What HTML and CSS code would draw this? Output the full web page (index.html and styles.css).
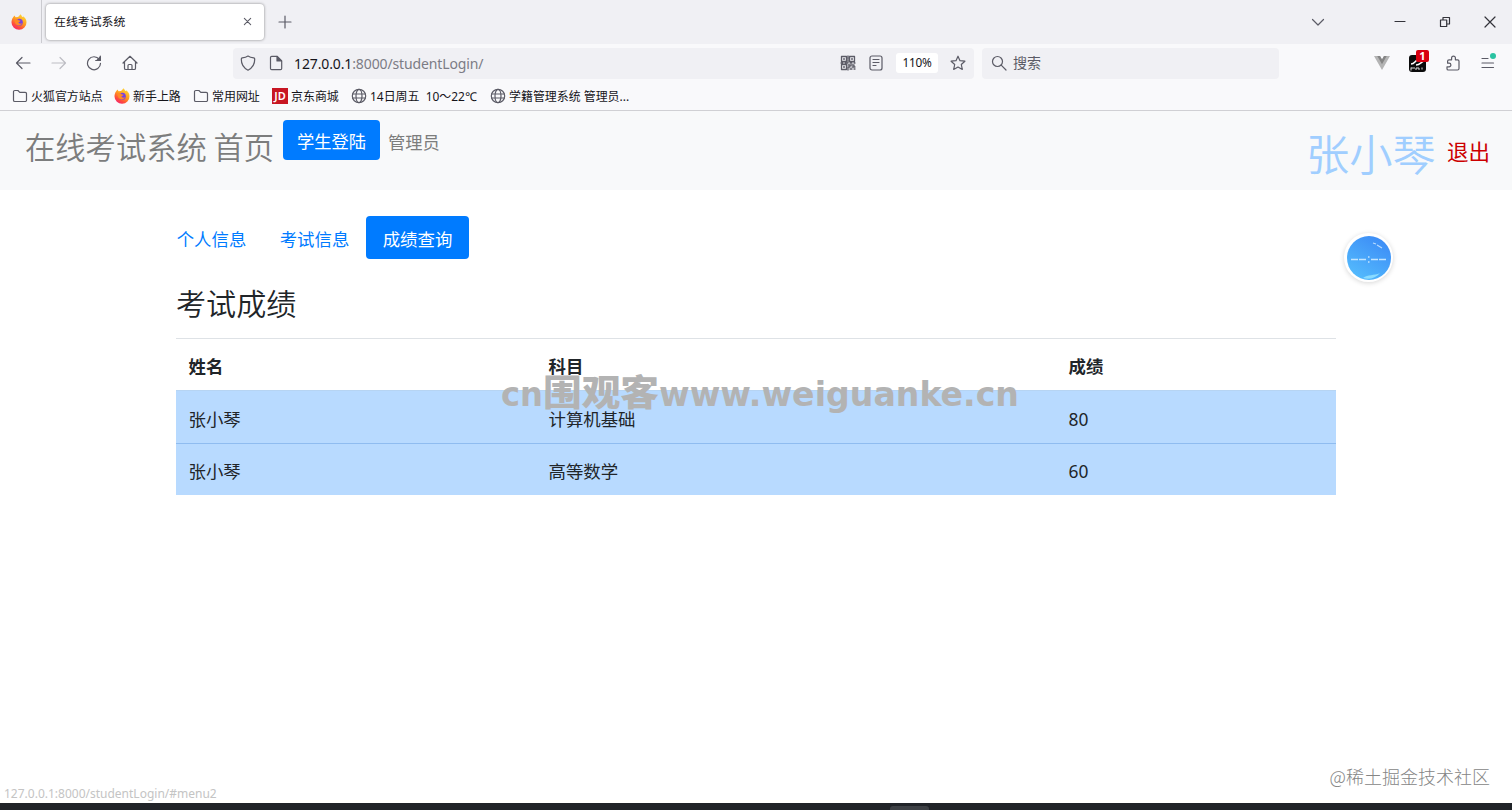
FILE: index.html
```html
<!DOCTYPE html>
<html lang="zh-CN">
<head>
  <meta charset="UTF-8">
  <title>在线考试系统</title>
  <link rel="stylesheet" href="styles.css">
</head>
<body>
  <svg width="0" height="0" class="defs">
    <defs>
      <linearGradient id="fox-body" x1="0.8" y1="0" x2="0.2" y2="1">
        <stop offset="0" stop-color="#ffe03a"/>
        <stop offset="0.45" stop-color="#ff9a1f"/>
        <stop offset="0.75" stop-color="#ff4a3d"/>
        <stop offset="1" stop-color="#f0207a"/>
      </linearGradient>
      <symbol id="firefox" viewBox="0 0 16 16">
        <path d="M2.2 3.2 3.4 1.6 4.6 3.3 6.8 3C8 2.4 8.8 1.4 9.3.3c1 .8 1.6 1.7 1.9 2.6l1.3-.5c1.900 1.400 3 3.400 3 5.800A7.500 7.500 0 0 1 .5 8.500C.5 6.400 1.100 4.600 2.200 3.200z" fill="url(#fox-body)"/>
        <circle cx="8.300" cy="8.200" r="3.500" fill="#7542e5"/>
        <path d="M3 5.500c2-.8 3.600-.3 4.600.8l2 .4c-.4 1.100-1.800 1-2.200 1.900.4 1.400 2.300 1.300 3.700.7-1 2.500-5 2.900-6.500.4C3.800 8.500 3.700 7 3 5.500z" fill="#ff8a25"/>
      </symbol>
      <symbol id="folder" viewBox="0 0 16 16">
        <path d="M1.500 12.200V3.800a1.300 1.300 0 0 1 1.300-1.300h3.100l1.900 1.900h5.400a1.300 1.300 0 0 1 1.300 1.300v6.500a1.300 1.300 0 0 1-1.300 1.300H2.800a1.300 1.300 0 0 1-1.300-1.300z"/>
      </symbol>
      <symbol id="globe" viewBox="0 0 16 16">
        <circle cx="8" cy="8" r="6.700"/>
        <ellipse cx="8" cy="8" rx="3" ry="6.700"/>
        <path d="M1.500 6h13M1.500 10h13"/>
      </symbol>
    </defs>
  </svg>

  <div class="tab-bar">
    <div class="pinned-tab"><svg class="fox" viewBox="0 0 16 16"><use href="#firefox"/></svg></div>
    <div class="tab">
      <span>在线考试系统</span>
      <svg class="icon close" viewBox="0 0 10 10"><path d="M1.500 1.500l7 7M8.500 1.500l-7 7"/></svg>
    </div>
    <svg class="icon new-tab" viewBox="0 0 14 14"><path d="M7 1v12M1 7h12"/></svg>
    <div class="window-buttons">
      <svg class="icon" viewBox="0 0 14 14"><path d="M1.500 4.500L7 10l5.500-5.500"/></svg>
      <svg class="icon" viewBox="0 0 14 14"><path d="M2 6.500h10"/></svg>
      <svg class="icon" viewBox="0 0 14 14"><path d="M2.500 5h6.200v6.500H2.500zM5 5V2.500h6.500V9H8.700"/></svg>
      <svg class="icon" viewBox="0 0 14 14"><path d="M2 2l10 10M12 2L2 12"/></svg>
    </div>
  </div>

  <div class="toolbar">
    <div class="nav-buttons">
      <svg class="icon" viewBox="0 0 16 16"><path d="M15 8H1.500M7 2.500L1.500 8 7 13.500"/></svg>
      <svg class="icon disabled" viewBox="0 0 16 16"><path d="M1 8h13.500M9 2.500L14.500 8 9 13.500"/></svg>
      <svg class="icon" viewBox="0 0 16 16"><path d="M13.300 4.500A6.500 6.500 0 1 0 14.500 8.300M14.300 1v4.500H9.700"/><path d="M14.300 2v3.500h-3.500z" fill="#5b5b66"/></svg>
      <svg class="icon" viewBox="0 0 16 16"><path d="M1 8l7-6.700L15 8M2.500 6.700v6.500c0 .8.500 1.300 1.300 1.300h8.400c.8 0 1.300-.5 1.300-1.300V6.700M6 14.500v-4c0-.6.400-1 1-1h2c.6 0 1 .4 1 1v4"/></svg>
    </div>
    <div class="url-bar">
      <svg class="icon" viewBox="0 0 16 16"><path d="M8 1C6.500 2 4 2.700 2.300 2.900c-.7.100-1 .5-1 1.200C1.200 9.500 3.500 13 8 15.200c4.500-2.200 6.800-5.700 6.700-11.100 0-.7-.3-1.100-1-1.200C12 2.700 9.500 2 8 1z"/></svg>
      <svg class="icon page-icon" viewBox="0 0 16 16"><path d="M2.500 2.500c0-.7.500-1.200 1.200-1.200h5.500L13.700 6v7.500c0 .7-.5 1.200-1.200 1.200H3.700c-.7 0-1.200-.5-1.200-1.200z"/><path d="M9 1.500V6h4.500z" fill="#5b5b66"/></svg>
      <span class="url"><b>127.0.0.1</b>:8000/studentLogin/</span>
      <svg class="icon qr" viewBox="0 0 16 16"><path d="M1.500 1.500h5v5h-5zM9.500 1.500h5v5h-5zM1.500 9.500h5v5h-5zM3.500 4h1M11.500 4h1M3.500 12h1M8 1v3M8 5v3H5M1 8h2M10 8h2M14 8h1M8 10h2v2H8v3M11 10h2M12 12h3M14 10v1M10 14h2M14 14h1"/></svg>
      <svg class="icon reader" viewBox="0 0 16 16"><rect x="2" y="1" width="12" height="14" rx="2"/><path d="M5 4.500h6M5 7.500h6M5 10.500h3"/></svg>
      <span class="zoom">110%</span>
      <svg class="icon star" viewBox="0 0 16 16"><path d="M8 1.200l2 4.500 4.900.5-3.600 3.300 1 4.900L8 12l-4.300 2.400 1-4.900L1.100 6.200 6 5.700z"/></svg>
    </div>
    <div class="search-bar">
      <svg class="icon" viewBox="0 0 16 16"><circle cx="6.500" cy="6.500" r="5"/><path d="M10.200 10.200L15 15"/></svg>
      <span>搜索</span>
    </div>
    <div class="extensions">
      <svg class="vue" viewBox="0 0 16 16"><path d="M0 1h6l2 3.500L10 1h6L8 15z" fill="#b4b4b4"/><path d="M3.300 1H6l2 3.500L10 1h2.700L8 9.300z" fill="#858585"/></svg>
      <div class="translate">
        <svg viewBox="0 0 17 17"><rect width="17" height="17" rx="3" fill="#0b0b0b"/><path d="M2 9c4 0 4-4 8-5M7 10c4 0 5-3 8-4" fill="none" stroke="#fff" stroke-width="1.500"/><path d="M2 13h4M2 15.500v-3M7 15v-2h3v2M13 12.500v2" fill="none" stroke="#ddd"/></svg>
        <span class="badge">1</span>
      </div>
      <svg class="icon puzzle" viewBox="0 0 16 16"><path d="M3.300 15h9.200c1 0 1.500-.5 1.500-1.500V6.200c0-1-.5-1.400-1.400-1.400h-2.200V3a1.900 1.900 0 0 0-3.800 0v1.800H4c-1 0-1.400.5-1.400 1.400v2h1.500a1.800 1.800 0 0 1 0 3.600H2v1.900c0 .8.500 1.300 1.300 1.300z"/></svg>
      <div class="menu">
        <svg class="icon" viewBox="0 0 16 16"><path d="M2 3.500h6M2 8h11.500M2 12.500h11.500"/></svg>
        <i class="dot"></i>
      </div>
    </div>
  </div>

  <div class="bookmarks">
    <a class="bm-1"><svg class="icon"><use href="#folder"/></svg>火狐官方站点</a>
    <a class="bm-2"><svg class="fox"><use href="#firefox"/></svg>新手上路</a>
    <a class="bm-3"><svg class="icon"><use href="#folder"/></svg>常用网址</a>
    <a class="bm-4"><span class="jd">JD</span>京东商城</a>
    <a class="bm-5"><svg class="icon"><use href="#globe"/></svg>14日周五&nbsp; 10～22℃</a>
    <a class="bm-6"><svg class="icon"><use href="#globe"/></svg>学籍管理系统 管理员...</a>
  </div>

  <div class="page">
    <nav class="navbar">
      <a class="brand">在线考试系统 首页</a>
      <a class="btn-login">学生登陆</a>
      <a class="nav-link">管理员</a>
      <div class="user">
        <span class="user-name">张小琴</span>
        <a class="logout">退出</a>
      </div>
    </nav>

    <div class="container">
      <ul class="pills">
        <li>个人信息</li>
        <li>考试信息</li>
        <li class="active">成绩查询</li>
      </ul>
      <h3>考试成绩</h3>
      <table>
        <thead>
          <tr><th class="col-name">姓名</th><th class="col-subject">科目</th><th>成绩</th></tr>
        </thead>
        <tbody>
          <tr><td>张小琴</td><td>计算机基础</td><td>80</td></tr>
          <tr><td>张小琴</td><td>高等数学</td><td>60</td></tr>
        </tbody>
      </table>
    </div>
  </div>

  <div class="clock-ball">
    <svg viewBox="0 0 44 44">
      <defs>
        <linearGradient id="ball" x1="0.2" y1="1" x2="0.800" y2="0">
          <stop offset="0" stop-color="#55bdfd"/>
          <stop offset="1" stop-color="#3b8af6"/>
        </linearGradient>
      </defs>
      <circle cx="22" cy="22" r="22" fill="url(#ball)"/>
      <path d="M16 42c5-4 11-2 17-5-4 5-11 7-17 5z" fill="#8bdcff"/>
      <path d="M26 7l3 1M30 9l5 3" stroke="#b9dcff" stroke-width="1.200"/>
      <path d="M4 23.500h7M12 23.500h7M24 23.500h7M32 23.500h7" stroke="#c4e5ff" stroke-width="1.500"/>
      <path d="M21 21h1.500M21 26h1.500" stroke="#c4e5ff" stroke-width="1.500"/>
    </svg>
  </div>

  <svg class="watermark" viewBox="0 0 520 46">
    <text x="0" y="31" textLength="42" lengthAdjust="spacingAndGlyphs" font-size="34">cn</text>
    <text x="42" y="31" textLength="116" lengthAdjust="spacingAndGlyphs" font-size="36" class="cjk">围观客</text>
    <text x="158" y="31" textLength="360" lengthAdjust="spacingAndGlyphs" font-size="34">www.weiguanke.cn</text>
  </svg>
  <div class="credit">@稀土掘金技术社区</div>
  <div class="status">127.0.0.1:8000/studentLogin/#menu2</div>
  <div class="taskbar"><i></i></div>
</body>
</html>
```
FILE: styles.css
```css
* {
  box-sizing: border-box;
  margin: 0;
  padding: 0;
}

body {
  width: 1512px;
  height: 810px;
  overflow: hidden;
  display: flex;
  flex-direction: column;
  position: relative;
  background: #fff;
  color: #212529;
  font-family: "Noto Sans", "Noto Sans CJK SC", sans-serif;
}

.defs {
  position: absolute;
}

svg {
  display: block;
  flex: none;
}

.icon {
  width: 16px;
  height: 16px;
  fill: none;
  stroke: #5b5b66;
  stroke-width: 1.2;
  stroke-linecap: round;
  stroke-linejoin: round;
}

.fox {
  width: 16px;
  height: 16px;
}

/* tabs */
.tab-bar {
  height: 44px;
  padding-bottom: 1px;
  display: flex;
  align-items: center;
  background: #f0f0f4;
}

.pinned-tab {
  width: 42px;
  height: 43px;
  padding: 14px 0 0 11px;
  border-right: 1px solid #cbcbd0;
  align-self: flex-start;
}

.tab {
  width: 218px;
  height: 36px;
  margin-left: 4px;
  padding: 0 12px 0 8px;
  display: flex;
  align-items: center;
  justify-content: space-between;
  background: #fff;
  border-radius: 4px;
  box-shadow: 0 0 3px rgba(0, 0, 0, 0.45);
  font-size: 11.9px;
  color: #15141a;
}

.tab span {
  padding-bottom: 2px;
}

.close {
  width: 9px;
  height: 9px;
}

.new-tab {
  width: 14px;
  height: 14px;
  margin-left: 14px;
}

.window-buttons {
  display: flex;
  margin-left: auto;
  padding-right: 15px;
}

.window-buttons .icon {
  width: 14px;
  height: 14px;
  margin-left: 31px;
  stroke: #33333a;
}

.window-buttons .icon:first-child {
  margin-right: 37px;
  stroke: #5b5b66;
}

/* toolbar */
.toolbar {
  height: 39px;
  padding-bottom: 1px;
  display: flex;
  align-items: center;
  background: #f9f9fb;
}

.nav-buttons {
  width: 233px;
  padding-left: 15px;
  display: flex;
  gap: 19.5px;
}

.disabled {
  stroke: #bdbdc3;
}

.url-bar {
  width: 741px;
  height: 31px;
  padding: 0 8px 0 7px;
  display: flex;
  align-items: center;
  background: #f0f0f4;
  border-radius: 4px;
}

.page-icon {
  margin-left: 12px;
}

.url {
  margin-left: 10px;
  font-size: 14px;
  letter-spacing: -0.12px;
  color: #7c7c85;
}

.url b {
  font-weight: 400;
  color: #15141a;
}

.qr {
  margin-left: auto;
  stroke-width: 1.3;
}

.reader {
  margin-left: 12px;
}

.zoom {
  width: 42px;
  height: 20px;
  margin: 0 12px;
  background: #fff;
  border-radius: 3px;
  font-size: 11.8px;
  line-height: 19px;
  letter-spacing: -0.2px;
  text-align: center;
  color: #15141a;
}

.search-bar {
  width: 297px;
  height: 31px;
  margin-left: 8px;
  padding-left: 9px;
  display: flex;
  align-items: center;
  gap: 6px;
  background: #f0f0f4;
  border-radius: 4px;
  font-size: 14px;
  color: #5b5b66;
}

.search-bar span {
  padding-bottom: 2px;
}

.extensions {
  display: flex;
  align-items: center;
  margin-left: auto;
  padding-right: 16px;
  gap: 19px;
}

.vue {
  width: 16px;
  height: 16px;
}

.translate {
  position: relative;
}

.translate svg {
  width: 17px;
  height: 17px;
}

.badge {
  position: absolute;
  top: -5px;
  left: 7px;
  width: 13px;
  height: 12px;
  border-radius: 2px;
  background: #d70010;
  color: #fff;
  font-size: 11px;
  font-weight: 700;
  line-height: 12px;
  text-align: center;
}

.menu {
  position: relative;
}

.dot {
  position: absolute;
  top: -2px;
  right: 0;
  width: 6px;
  height: 6px;
  border-radius: 50%;
  background: #2ac3a2;
}

/* bookmarks */
.bookmarks {
  height: 28px;
  padding: 0 0 2px 12px;
  display: flex;
  align-items: center;
  background: #f9f9fb;
  border-bottom: 1px solid #d0d0d4;
  font-size: 11.95px;
  color: #15141a;
}

.bookmarks a {
  display: flex;
  align-items: center;
  gap: 3px;
  white-space: nowrap;
}

.bm-1 { width: 102px; }
.bm-2 { width: 79px; }
.bm-3 { width: 79px; }
.bm-4 { width: 79px; }
.bm-5 { width: 139px; }

.jd {
  width: 16px;
  height: 16px;
  background: #c81623;
  color: #fff;
  font-size: 11px;
  font-weight: 600;
  line-height: 16px;
  text-align: center;
}

/* page */
.page {
  flex: 1;
}

.navbar {
  height: 79px;
  padding: 9px 22px 0 25px;
  display: flex;
  align-items: flex-start;
  background: #f8f9fa;
  color: #7c7d7d;
  font-family: "Noto Sans CJK SC", sans-serif;
  font-size: 17.3px;
}

.brand {
  width: 258px;
  padding-top: 4px;
  font-size: 30.3px;
  line-height: 45px;
  font-weight: 350;
  white-space: nowrap;
}

.btn-login {
  width: 97px;
  height: 40px;
  border-radius: 4px;
  background: #007bff;
  color: #fff;
  line-height: 42px;
  text-align: center;
}

.nav-link {
  margin-left: 8px;
  line-height: 44px;
}

.user {
  display: flex;
  margin-left: auto;
}

.user-name {
  width: 141px;
  font-size: 43.3px;
  line-height: 64px;
  font-weight: 350;
  color: #a0ceff;
}

.logout {
  font-size: 21.5px;
  line-height: 62px;
  color: #cc0000;
}

.container {
  width: 1160px;
  margin: 26px auto 0;
  font-size: 17.4px;
}

.pills {
  display: flex;
  list-style: none;
  margin-left: -16px;
  color: #007bff;
}

.pills li {
  width: 103px;
  height: 43px;
  line-height: 46px;
  text-align: center;
}

.pills .active {
  border-radius: 4px;
  background: #007bff;
  color: #fff;
}

h3 {
  margin-top: 23px;
  font-size: 30.1px;
  font-weight: 350;
  line-height: 44px;
}

table {
  width: 100%;
  margin-top: 12px;
  border-collapse: collapse;
  table-layout: fixed;
}

.col-name { width: 360px; }
.col-subject { width: 520px; }

th,
td {
  height: 52px;
  padding: 4px 12px 0 12.5px;
  border-top: 1px solid #dee2e6;
  text-align: left;
  line-height: 26px;
}

th {
  padding-top: 2px;
}

tbody tr {
  background: #b8daff;
}

tbody tr:first-child td {
  height: 53px;
  border-top-color: #b6d4f3;
}

tbody tr:last-child td {
  height: 51px;
  border-top-color: #8fbcf0;
}

/* overlays */
.clock-ball {
  position: absolute;
  left: 1344px;
  top: 233px;
  width: 49px;
  height: 49px;
  padding: 2.5px;
  border-radius: 50%;
  background: #fff;
  box-shadow: 0 1px 5px rgba(0, 0, 0, 0.16);
}

.watermark {
  position: absolute;
  left: 501px;
  top: 375px;
  width: 520px;
  height: 46px;
  overflow: visible;
  fill: #b3b3b3;
  font-family: "DejaVu Sans", sans-serif;
  font-weight: 700;
}

.watermark .cjk {
  font-family: "Noto Sans CJK SC", sans-serif;
  font-weight: 900;
}

.credit {
  position: absolute;
  right: 22px;
  bottom: 21px;
  font-size: 18px;
  line-height: 26px;
  font-family: "Noto Sans CJK SC", sans-serif;
  font-weight: 300;
  color: #858585;
}

.status {
  position: absolute;
  left: 4px;
  bottom: 7px;
  font-size: 12px;
  line-height: 18px;
  color: #c4c4c4;
}

.taskbar {
  height: 7px;
  background: #202328;
}

.taskbar i {
  display: block;
  width: 39px;
  height: 4px;
  margin-left: 890px;
  position: relative;
  top: 3px;
  border-radius: 3px 3px 0 0;
  background: #3d4045;
}
```
